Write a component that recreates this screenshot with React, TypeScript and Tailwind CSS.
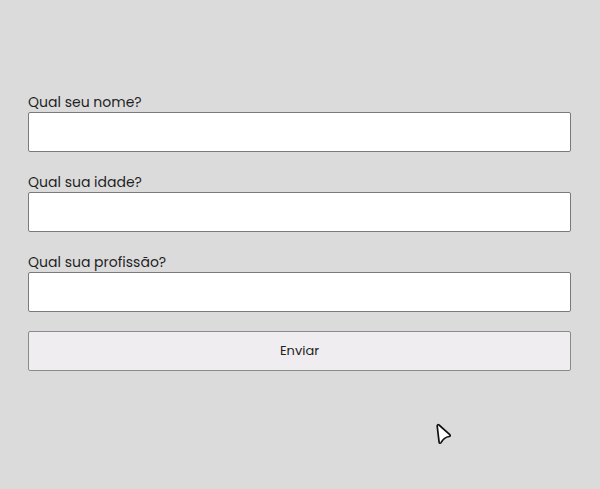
import React from "react";

export default function App() {
  const font = { fontFamily: '"Poppins", "Noto Sans", "Open Sans", sans-serif' };
  const fields = ["Qual seu nome?", "Qual sua idade?", "Qual sua profissão?"];
  return (
    <div className="relative w-[600px] h-[489px] bg-[#dcdbdc] overflow-hidden" style={font}>
      <div className="flex flex-col pl-[28px] pr-[29px] pt-[92px]">
        <div className="flex flex-col gap-5">
          {fields.map((f) => (
            <div key={f} className="flex flex-col">
              <label className="text-[14px] leading-5 text-[#1f1f24]">{f}</label>
              <input className="h-10 w-full bg-white border border-[#7a7a7a] rounded-[2px] outline-none" />
            </div>
          ))}
        </div>
        <button className="mt-[19px] h-10 w-full bg-[#efedef] border border-[#8a8a8a] rounded-[2px] text-[13px] text-[#1f1f24]">
          Enviar
        </button>
      </div>
      <svg className="absolute left-[432px] top-[420px]" width="24" height="28" viewBox="0 0 24 28">
        <path
          d="M5.2 6.2 C5 4.9 6 4.3 7 5 L17.8 14.6 C18.6 15.3 18.2 16.4 17.2 16.5 C13.5 16.9 11.2 18.6 9 22.6 C8.4 23.6 7.2 23.4 7.1 22.2 Z"
          fill="white"
          stroke="#111"
          strokeWidth="1.7"
          strokeLinejoin="round"
        />
      </svg>
    </div>
  );
}
